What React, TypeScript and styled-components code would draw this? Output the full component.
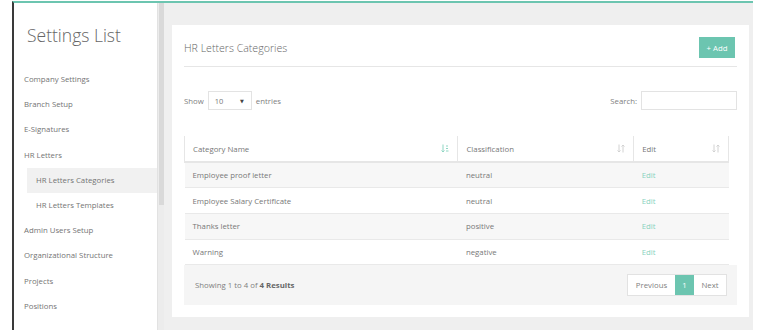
import styled, { createGlobalStyle } from "styled-components";

const GlobalStyle = createGlobalStyle`
  html, body {
    margin: 0;
    padding: 0;
    background: #ffffff;
  }
  body {
    font-family: "Open Sans", "DejaVu Sans", sans-serif;
    color: #777;
    overflow: hidden;
  }
  * {
    box-sizing: border-box;
  }
`;

const TEAL = "#6cc5b0";

const Frame = styled.div`
  margin: 1px 0 0 12px;
  width: 741px;
  height: 329px;
  border-left: 2px solid #3a3a3a;
  border-top: 2px solid ${TEAL};
  display: flex;
  overflow: hidden;
`;

const Sidebar = styled.aside`
  width: 150px;
  display: flex;
  background: #fff;
`;

const SideContent = styled.nav`
  flex: 1;
  display: flex;
  flex-direction: column;
`;

const SideTitle = styled.h2`
  margin: 0 0 20px;
  padding: 20px 0 0 13px;
  font-size: 17.5px;
  font-weight: 300;
  line-height: 24px;
  color: #666;
`;

const MenuItem = styled.div<{ $sub?: boolean; $active?: boolean }>`
  height: 25.2px;
  line-height: 25.2px;
  font-size: 7.8px;
  color: #747474;
  white-space: nowrap;
  margin-left: ${(p) => (p.$sub ? "13px" : "0")};
  padding-left: ${(p) => (p.$sub ? "9px" : "10px")};
  background: ${(p) => (p.$active ? "#f1f1f1" : "transparent")};
`;

const ScrollTrack = styled.div`
  width: 7px;
  background: #ececec;
  border-left: 1px solid #e2e2e2;
  display: flex;
  flex-direction: column;
`;

const ScrollThumb = styled.div`
  height: 202px;
  margin-left: 1px;
  background: #d9d9d9;
`;

const Main = styled.main`
  flex: 1;
  background: #efefef;
  padding: 22px 4px 0 8px;
`;

const Card = styled.section`
  background: #fff;
  height: 292px;
  padding: 0 12px;
`;

const CardHeader = styled.div`
  display: flex;
  align-items: center;
  justify-content: space-between;
  padding: 12px 2px 8px 0;
  border-bottom: 1px solid #e6e6e6;
`;

const CardTitle = styled.h3`
  margin: 0;
  font-size: 10.6px;
  font-weight: 300;
  color: #666;
`;

const AddButton = styled.button`
  height: 21px;
  width: 36px;
  border: none;
  padding: 0;
  background: ${TEAL};
  color: #fff;
  font-family: inherit;
  font-size: 7.8px;
`;

const Controls = styled.div`
  margin-top: 24px;
  display: flex;
  align-items: center;
  justify-content: space-between;
  font-size: 7.8px;
  color: #808080;
`;

const Group = styled.label`
  display: flex;
  align-items: center;
  gap: 4px;
`;

const SelectBox = styled.div`
  width: 44px;
  height: 19px;
  border: 1px solid #e3e3e3;
  display: flex;
  align-items: center;
  justify-content: space-between;
  padding: 0 7px 0 6px;
  font-size: 7.5px;
  color: #777;
`;

const Caret = styled.span`
  font-size: 5px;
  color: #444;
`;

const SearchInput = styled.div`
  width: 96px;
  height: 19px;
  border: 1px solid #e3e3e3;
`;

const Table = styled.table`
  margin-top: 26px;
  width: 545px;
  border-collapse: collapse;
  font-size: 7.8px;
  color: #777;
`;

const Th = styled.th<{ $w: number }>`
  width: ${(p) => p.$w}px;
  height: 26px;
  padding: 0 8px 0 8px;
  text-align: left;
  font-weight: 400;
  color: #777;
  border-left: 1px solid #e6e6e6;
  border-right: 1px solid #e6e6e6;
  border-bottom: 2px solid #e6e6e6;
`;

const ThInner = styled.div`
  display: flex;
  align-items: center;
  justify-content: space-between;
`;

const Tr = styled.tr<{ $striped?: boolean }>`
  background: ${(p) => (p.$striped ? "#f7f7f7" : "#fff")};
  border-bottom: 1px solid #e9e9e9;
`;

const Td = styled.td`
  height: 25.7px;
  padding: 0 8px;
`;

const EditLink = styled.a`
  color: #86d2be;
  text-decoration: none;
`;

const Footer = styled.div`
  height: 40px;
  background: #f5f5f5;
  display: flex;
  align-items: center;
  justify-content: space-between;
  padding: 0 10px 0 11px;
  font-size: 7.8px;
  color: #808080;

  b {
    font-weight: 700;
    color: #666;
  }
`;

const Pager = styled.div`
  display: flex;
  height: 22px;
  border: 1px solid #e2e2e2;
  background: #fff;
`;

const PageBtn = styled.div<{ $active?: boolean; $w: number }>`
  width: ${(p) => p.$w}px;
  display: flex;
  align-items: center;
  justify-content: center;
  font-size: 7.8px;
  color: ${(p) => (p.$active ? "#fff" : "#808080")};
  background: ${(p) => (p.$active ? TEAL : "transparent")};
`;

function SortIcon({ active }: { active?: boolean }) {
  const c = active ? "#8fd6c3" : "#d2d2d2";
  if (active) {
    return (
      <svg width="8" height="9" viewBox="0 0 8 9">
        <path d="M2 0.5V8M0.5 6.5L2 8L3.5 6.5" stroke={c} strokeWidth="1" fill="none" />
        <path d="M5 2H7M5 4.5H7M5 7H7.5" stroke={c} strokeWidth="1" fill="none" />
      </svg>
    );
  }
  return (
    <svg width="8" height="9" viewBox="0 0 8 9">
      <path d="M2 0.5V8M0.5 6.5L2 8L3.5 6.5" stroke={c} strokeWidth="1" fill="none" />
      <path d="M6 8.5V1M4.5 2.5L6 1L7.5 2.5" stroke={c} strokeWidth="1" fill="none" />
    </svg>
  );
}

const menu = [
  { label: "Company Settings" },
  { label: "Branch Setup" },
  { label: "E-Signatures" },
  { label: "HR Letters" },
  { label: "HR Letters Categories", sub: true, active: true },
  { label: "HR Letters Templates", sub: true },
  { label: "Admin Users Setup" },
  { label: "Organizational Structure" },
  { label: "Projects" },
  { label: "Positions" },
];

const rows = [
  { name: "Employee proof letter", cls: "neutral" },
  { name: "Employee Salary Certificate", cls: "neutral" },
  { name: "Thanks letter", cls: "positive" },
  { name: "Warning", cls: "negative" },
];

export default function App() {
  return (
    <>
      <GlobalStyle />
      <Frame>
        <Sidebar>
          <SideContent>
            <SideTitle>Settings List</SideTitle>
            {menu.map((m) => (
              <MenuItem key={m.label} $sub={m.sub} $active={m.active}>
                {m.label}
              </MenuItem>
            ))}
          </SideContent>
          <ScrollTrack>
            <ScrollThumb />
          </ScrollTrack>
        </Sidebar>
        <Main>
          <Card>
            <CardHeader>
              <CardTitle>HR Letters Categories</CardTitle>
              <AddButton>+ Add</AddButton>
            </CardHeader>
            <Controls>
              <Group>
                Show
                <SelectBox>
                  10 <Caret>▼</Caret>
                </SelectBox>
                entries
              </Group>
              <Group>
                Search:
                <SearchInput />
              </Group>
            </Controls>
            <Table>
              <thead>
                <tr>
                  <Th $w={274}>
                    <ThInner>
                      Category Name <SortIcon active />
                    </ThInner>
                  </Th>
                  <Th $w={176}>
                    <ThInner>
                      Classification <SortIcon />
                    </ThInner>
                  </Th>
                  <Th $w={95}>
                    <ThInner>
                      Edit <SortIcon />
                    </ThInner>
                  </Th>
                </tr>
              </thead>
              <tbody>
                {rows.map((r, i) => (
                  <Tr key={r.name} $striped={i % 2 === 0}>
                    <Td>{r.name}</Td>
                    <Td>{r.cls}</Td>
                    <Td>
                      <EditLink>Edit</EditLink>
                    </Td>
                  </Tr>
                ))}
              </tbody>
            </Table>
            <Footer>
              <span>
                Showing 1 to 4 of <b>4 Results</b>
              </span>
              <Pager>
                <PageBtn $w={47}>Previous</PageBtn>
                <PageBtn $w={19} $active>
                  1
                </PageBtn>
                <PageBtn $w={32}>Next</PageBtn>
              </Pager>
            </Footer>
          </Card>
        </Main>
      </Frame>
    </>
  );
}
